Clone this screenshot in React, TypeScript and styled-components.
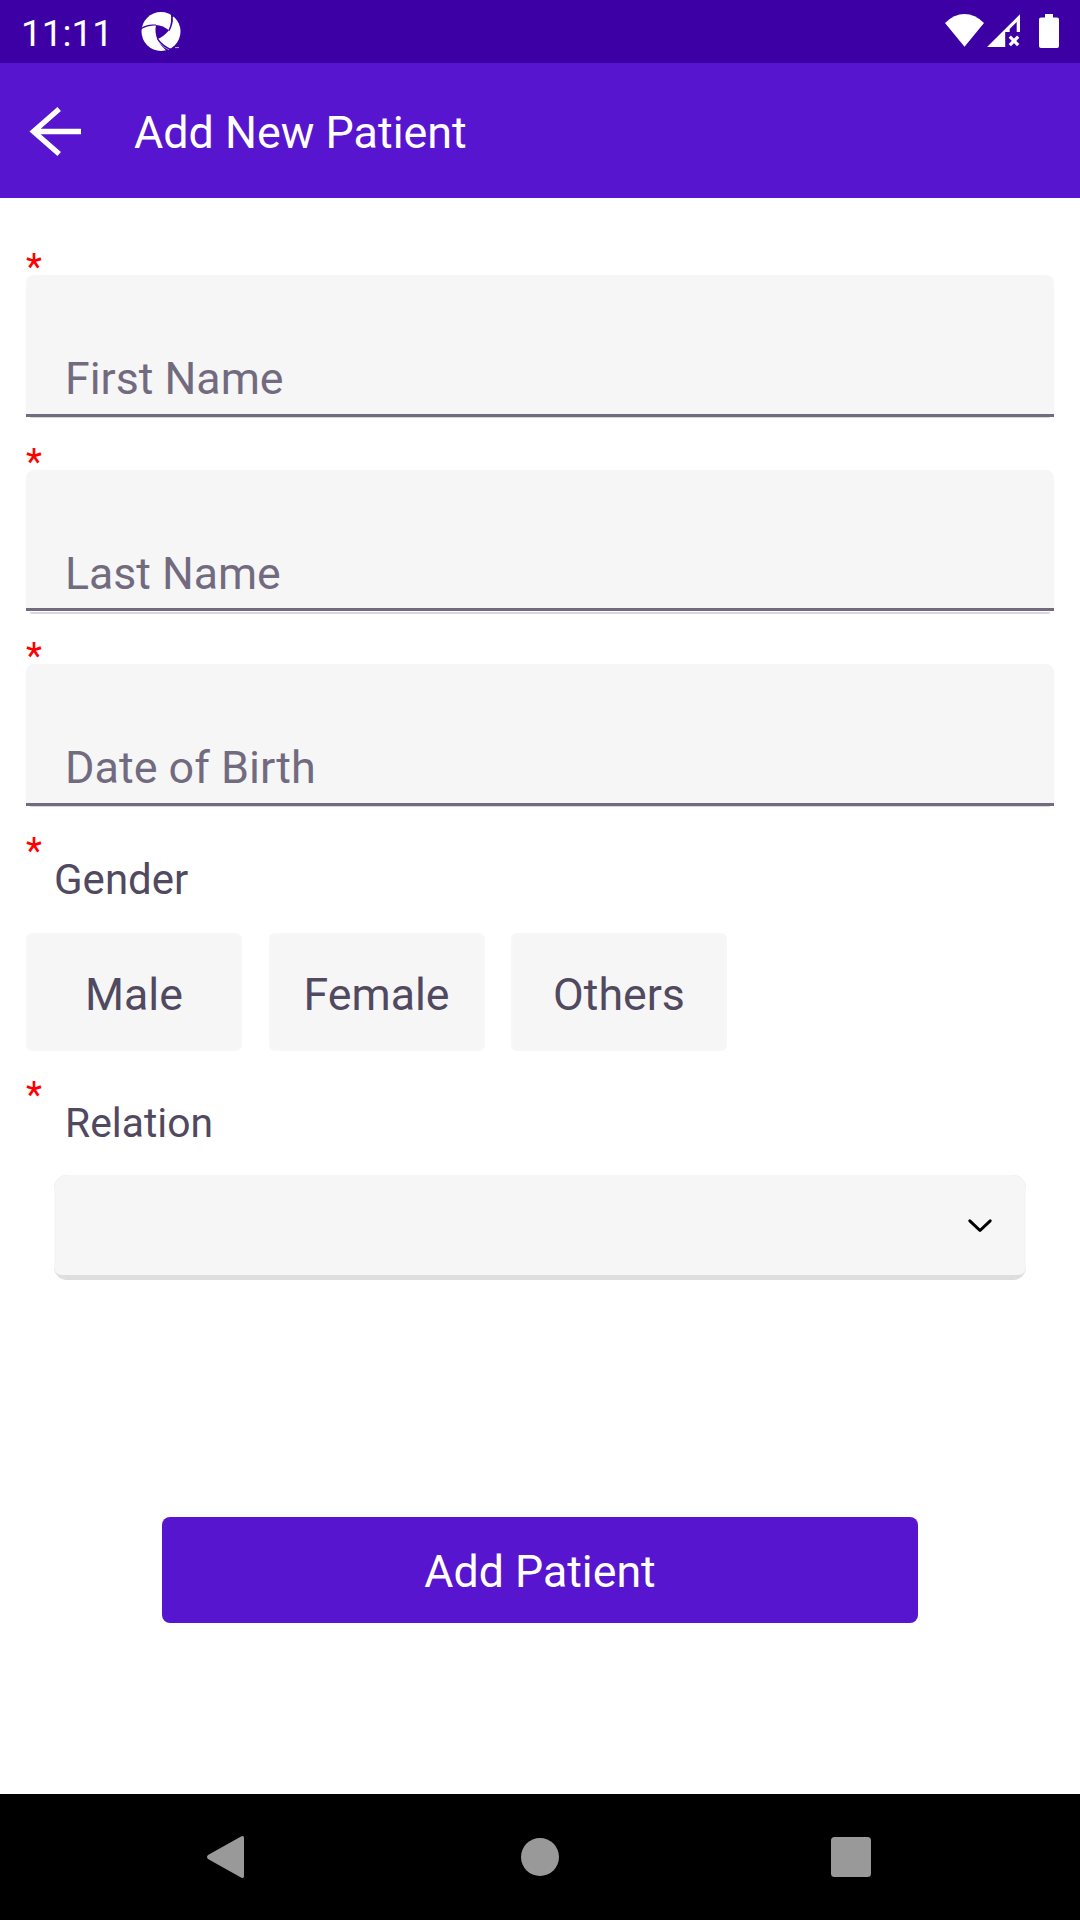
import React from 'react';
import styled, { createGlobalStyle } from 'styled-components';

const Global = createGlobalStyle`
  * { box-sizing: border-box; }
  body { margin: 0; background: #fff; }
`;

const Screen = styled.div`
  width: 1080px;
  height: 1920px;
  display: flex;
  flex-direction: column;
  background: #fff;
  font-family: Roboto, "Liberation Sans", sans-serif;
  overflow: hidden;
`;

const StatusBar = styled.div`
  height: 63px;
  flex: none;
  background: #3c00a5;
  display: flex;
  align-items: flex-start;
  color: #fff;
  padding: 0 21px 0 21px;
`;

const Clock = styled.span`
  width: 120px;
  font-size: 37px;
  line-height: 43px;
  padding-top: 12px;
`;

const StatusIcons = styled.div`
  margin-left: auto;
  display: flex;
`;

const AppBar = styled.header`
  height: 135px;
  flex: none;
  background: #5715d0;
  color: #fff;
  display: flex;
  align-items: center;
  padding-left: 28px;
  gap: 51px;
`;

const Title = styled.h1`
  margin: 5px 0 0;
  font-size: 44.85px;
  font-weight: 400;
  line-height: 54px;
`;

const Form = styled.main`
  flex: 1;
  display: flex;
  flex-direction: column;
  padding: 52px 26px 0;
`;

const Required = styled.span`
  flex: none;
  color: #f00;
  font-size: 37px;
  line-height: 33px;
  height: 25px;
`;

const Field = styled.label<{ $tail: number }>`
  display: flex;
  flex-direction: column;
  height: ${(p) => 170 + p.$tail}px;
`;

const FieldBox = styled.div<{ $height: number; $size: number }>`
  flex: none;
  height: ${(p) => p.$height}px;
  background: #f6f6f6;
  border-radius: 8px 8px 0 0;
  border-bottom: 3px solid #726b7f;
  padding: 77px 39px 0;
  color: #726b7f;
  font-size: ${(p) => p.$size}px;
  line-height: 54px;
`;

const FieldShade = styled.div<{ $offset: number; $height: number }>`
  margin: ${(p) => p.$offset}px 4px 0;
  height: ${(p) => p.$height}px;
  background: #d8d5dc;
  border-radius: 0 0 4px 4px;
`;

const Group = styled.section<{ $height: number }>`
  display: flex;
  flex-direction: column;
  height: ${(p) => p.$height}px;
`;

const GroupLabel = styled.span<{ $indent: number; $height: number; $size: number; $line: number }>`
  flex: none;
  padding-left: ${(p) => p.$indent}px;
  color: #51495f;
  font-size: ${(p) => p.$size}px;
  line-height: ${(p) => p.$line}px;
  height: ${(p) => p.$height}px;
`;

const Choices = styled.div`
  display: flex;
  gap: 26.5px;
`;

const Choice = styled.button`
  width: 216px;
  height: 118px;
  padding: 5px 0 0;
  border: 3px solid #f7f7f7;
  border-radius: 6px;
  background: #f6f6f6;
  color: #51495f;
  font: 400 44.7px/54px Roboto, sans-serif;
`;

const Select = styled.div`
  flex: none;
  margin: 0 28px;
  height: 105px;
  border-radius: 13px;
  background: #dedede;
  overflow: hidden;
`;

const SelectFace = styled.div`
  height: 100px;
  border-radius: 12px 12px 8px 8px;
  background: #f6f6f6;
  display: flex;
  align-items: center;
  justify-content: flex-end;
  padding-right: 33px;
`;

const Submit = styled.button`
  align-self: center;
  margin-top: 237px;
  width: 756px;
  height: 106px;
  border: 0;
  border-radius: 8px;
  background: #5715d0;
  color: #fff;
  padding: 4px 0 0;
  font: 400 44.7px/54px Roboto, sans-serif;
`;

const NavBar = styled.nav`
  height: 126px;
  flex: none;
  background: #000;
  display: flex;
  align-items: center;
  justify-content: space-between;
  padding: 0 209px 0 207px;
`;

const fields = [
  { label: 'First Name', size: 44.7, tail: 0, box: 142, offset: 0, shade: 1 },
  { label: 'Last Name', size: 44.6, tail: -1, box: 141, offset: 1, shade: 2 },
  { label: 'Date of Birth', size: 44.95, tail: 0, box: 142, offset: 0, shade: 1 },
];

export default function App() {
  return (
    <Screen>
      <Global />
      <StatusBar>
        <Clock>11:11</Clock>
        <svg width="40" height="63" viewBox="141 0 40 63">
          <circle cx="161" cy="31.5" r="19.5" fill="#fff" />
          <g fill="#3c00a5">
            <path d="M156 25 Q163 25.5 169 30.3 Q164 36.5 157.3 39.3 Q154.5 32 156 25Z" />
            <path d="M141 28 Q147 23.5 156 24.6 L156 25.6 Q147 25.5 141 29.5Z" />
            <path d="M170.6 12.5 Q172.5 22 168.4 30.4 L169.4 31 Q173.5 24 172.8 17 L175 15Z" />
            <path d="M157 39 Q161 46.5 167.5 51.5 L173 49.4 Q164 47 158 38.6Z" />
          </g>
          <path d="M158.5 41.5 Q162.5 47.5 169 49.8" stroke="#fff" strokeWidth="0.5" fill="none" />
          <path d="M175 47.6 h4" stroke="#fff" strokeWidth="1" opacity="0.7" />
        </svg>
        <StatusIcons>
          <svg width="114" height="63" viewBox="945 0 114 63" fill="#fff">
            <path d="M945 23 Q954 14 964.5 14 Q975 14 984 23 L964.5 46.7Z" />
            <path d="M987 46.9 L1020 14.3 V32 H1016.7 V22 L1009.7 29 V32 H1005.2 V46.9Z" />
            <path d="M1009.8 36.7 L1018.2 45.2 M1018.2 36.7 L1009.8 45.2" stroke="#fff" strokeWidth="3.2" />
            <path d="M1045 14 H1053 V17.5 H1057 Q1059 17.5 1059 19.5 V46 Q1059 48 1057 48 H1041 Q1039 48 1039 46 V19.5 Q1039 17.5 1041 17.5 H1045Z" />
          </svg>
        </StatusIcons>
      </StatusBar>
      <AppBar>
        <svg width="55" height="52" viewBox="28 105 55 52" fill="none" stroke="#fff" strokeWidth="5.3">
          <path d="M81 131.5 H33 M59.2 109 L33.5 131.5 L59.2 154" />
        </svg>
        <Title>Add New Patient</Title>
      </AppBar>
      <Form>
        {fields.map((f) => (
          <Field key={f.label} $tail={25 + f.tail}>
            <Required>*</Required>
            <FieldBox $height={f.box} $size={f.size}>{f.label}</FieldBox>
            <FieldShade $offset={f.offset} $height={f.shade} />
          </Field>
        ))}
        <Group $height={244}>
          <Required>*</Required>
          <GroupLabel $indent={28} $height={74} $size={42} $line={42}>Gender</GroupLabel>
          <Choices>
            <Choice>Male</Choice>
            <Choice>Female</Choice>
            <Choice>Others</Choice>
          </Choices>
        </Group>
        <Group $height={202}>
          <Required>*</Required>
          <GroupLabel $indent={39} $height={72} $size={40.8} $line={40}>Relation</GroupLabel>
          <Select>
            <SelectFace>
              <svg width="26" height="18" viewBox="967 1215 26 18" fill="none" stroke="#000" strokeWidth="3" strokeLinecap="round" strokeLinejoin="round">
                <path d="M969.8 1219.8 L980 1229.5 L990.2 1219.8" />
              </svg>
            </SelectFace>
          </Select>
        </Group>
        <Submit>Add Patient</Submit>
      </Form>
      <NavBar>
        <svg width="37" height="42" viewBox="207 1836 37 42" fill="#999">
          <path d="M241 1836.5 Q244 1835 244 1838 V1876 Q244 1879 241 1877.5 L208 1859 Q206 1857 208 1855Z" />
        </svg>
        <svg width="47" height="40" viewBox="0 0 47 40"><circle cx="27" cy="20" r="19" fill="#999" /></svg>
        <svg width="42" height="40" viewBox="829 1837 42 40"><rect x="831" y="1837" width="40" height="40" rx="3.5" fill="#999" /></svg>
      </NavBar>
    </Screen>
  );
}
